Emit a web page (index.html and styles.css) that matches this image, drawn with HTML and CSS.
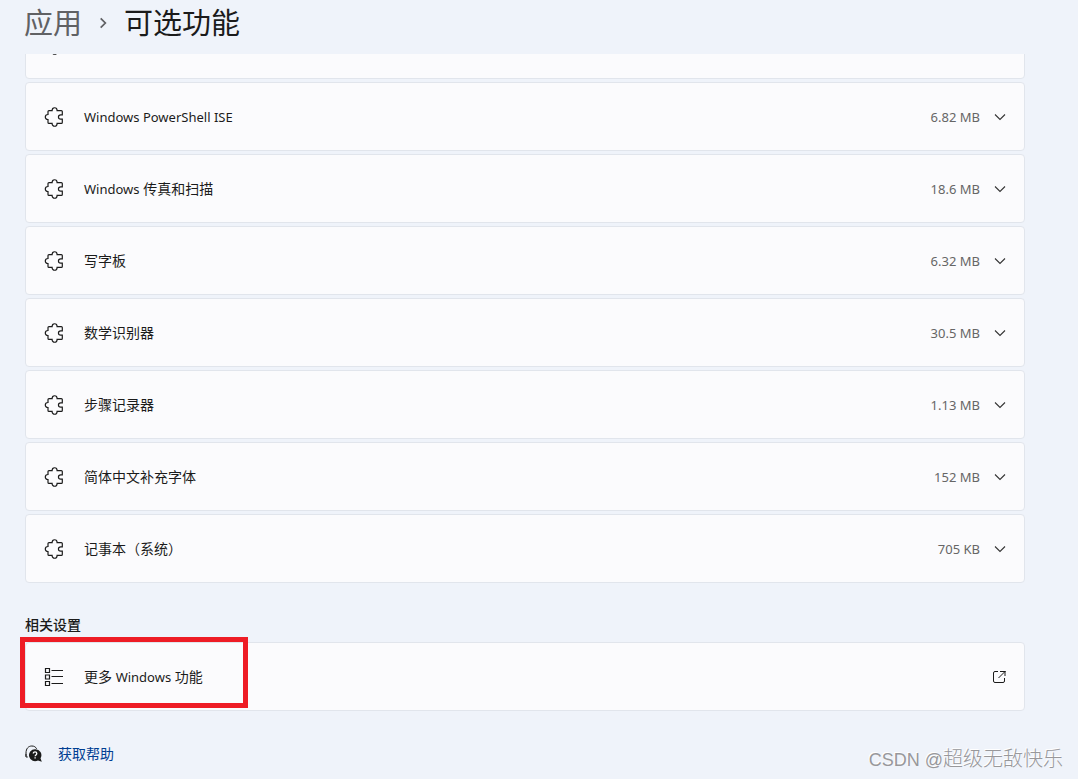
FILE: index.html
```
<!DOCTYPE html>
<html lang="zh-CN">
<head>
    <meta charset="UTF-8">
    <meta name="viewport" content="width=device-width, initial-scale=1.0">
    <title>可选功能</title>
    <link rel="stylesheet" href="styles.css">
</head>
<body>
    <svg class="sprite" aria-hidden="true">
        <symbol id="puzzle" viewBox="0 0 20 20">
            <path d="M5 3.600h3.100c0-3.800 5-3.800 5 0h4.200a1 1 0 0 1 1 1v3.200h-1.600c-3 0-3 4.400 0 4.400h1.600v3.200a1 1 0 0 1-1 1h-4.200c0 3.800-5 3.800-5 0H5a1 1 0 0 1-1-1v-2.900c-3.600 0-3.600-5 0-5V4.600a1 1 0 0 1 1-1z"/>
        </symbol>
        <symbol id="chevron" viewBox="0 0 12 12">
            <path d="M1 3.500l5 5 5-5"/>
        </symbol>
    </svg>

    <nav class="titulo">
        <a href="#" class="padre">应用</a>
        <svg class="separador" viewBox="0 0 12 12"><path d="M4 2l4 4-4 4"/></svg>
        <h1>可选功能</h1>
    </nav>

    <main class="contenido">
        <div class="lista">
            <button class="fila" aria-label="功能">
                <svg class="icono"><use href="#puzzle"/></svg>
                <span class="nombre"></span>
            </button>
            <button class="fila">
                <svg class="icono"><use href="#puzzle"/></svg>
                <span class="nombre"><span class="latin">Windows PowerShell ISE</span></span>
                <span class="peso">6.82 MB</span>
                <svg class="flecha"><use href="#chevron"/></svg>
            </button>
            <button class="fila">
                <svg class="icono"><use href="#puzzle"/></svg>
                <span class="nombre"><span class="latin">Windows</span> 传真和扫描</span>
                <span class="peso">18.6 MB</span>
                <svg class="flecha"><use href="#chevron"/></svg>
            </button>
            <button class="fila">
                <svg class="icono"><use href="#puzzle"/></svg>
                <span class="nombre">写字板</span>
                <span class="peso">6.32 MB</span>
                <svg class="flecha"><use href="#chevron"/></svg>
            </button>
            <button class="fila">
                <svg class="icono"><use href="#puzzle"/></svg>
                <span class="nombre">数学识别器</span>
                <span class="peso">30.5 MB</span>
                <svg class="flecha"><use href="#chevron"/></svg>
            </button>
            <button class="fila">
                <svg class="icono"><use href="#puzzle"/></svg>
                <span class="nombre">步骤记录器</span>
                <span class="peso">1.13 MB</span>
                <svg class="flecha"><use href="#chevron"/></svg>
            </button>
            <button class="fila">
                <svg class="icono"><use href="#puzzle"/></svg>
                <span class="nombre">简体中文补充字体</span>
                <span class="peso">152 MB</span>
                <svg class="flecha"><use href="#chevron"/></svg>
            </button>
            <button class="fila">
                <svg class="icono"><use href="#puzzle"/></svg>
                <span class="nombre">记事本（系统）</span>
                <span class="peso">705 KB</span>
                <svg class="flecha"><use href="#chevron"/></svg>
            </button>
        </div>

        <h2>相关设置</h2>
        <div class="relacionado">
            <button class="fila">
                <svg class="icono" viewBox="0 0 20 20">
                    <path d="M1.500 1.500h4v4h-4zM1.500 8h4v4h-4zM1.500 14.500h4v4h-4zM7.500 3.500H19M7.500 9.500H19M7.500 16.500H19"/>
                </svg>
                <span class="nombre">更多 <span class="latin">Windows</span> 功能</span>
                <svg class="externo" viewBox="0 0 14 14">
                    <path d="M6 1.500H3A1.500 1.500 0 0 0 1.500 3v8A1.500 1.500 0 0 0 3 12.500h8a1.500 1.500 0 0 0 1.500-1.500V8M8 1.500h5.500M13 1v5M13 1.500L6.500 8"/>
                </svg>
            </button>
            <div class="resaltado"></div>
        </div>

        <a href="#" class="ayuda">
            <svg viewBox="0 0 18 18">
                <path class="auricular" d="M1 11.500V8C1 3.500 3.500 1 6.800 1c2.300 0 4 1 4.800 2.800M1 9v3h1.800"/>
                <path class="globo" d="M10 4.200a6 6 0 1 0 3 11.200l3.800 1.300-1.300-3.400A6 6 0 0 0 10 4.200z"/>
                <path class="pregunta" d="M8.300 8.600c0-2.200 3.500-2.200 3.500 0 0 1.300-1.700 1.300-1.700 2.600M10.100 12.300v1.300"/>
            </svg>
            <span>获取帮助</span>
        </a>
    </main>

    <div class="marca"><span class="csdn">CSDN @</span>超级无敌快乐</div>
</body>
</html>
```
FILE: styles.css
```
*{
    box-sizing: border-box;
}

body{
    position: relative;
    min-height: 100vh;
    margin: 0;
    background-color: #eff3fa;
    color: #1b1b1b;
    font-family: "Noto Sans", "Noto Sans CJK SC", sans-serif;
    font-size: 14px;
    line-height: 20px;
}

svg{
    flex: none;
    fill: none;
    stroke: #1b1b1b;
}

.sprite{
    display: none;
}

.titulo{
    display: flex;
    align-items: center;
    height: 54px;
    padding: 0 24px 8px;
    font-size: 29px;
    line-height: 40px;
}

.titulo h1{
    margin: 0;
    font-size: 29px;
    font-weight: 400;
}

.padre{
    color: #606164;
    text-decoration: none;
}

.separador{
    width: 14px;
    height: 14px;
    margin: 0 14px;
    stroke: #606164;
    stroke-width: 1.5;
}

.contenido{
    overflow: hidden;
    padding: 0 53px 0 25px;
}

/* la lista aparece desplazada bajo el titulo */
.lista{
    display: flex;
    flex-direction: column;
    gap: 3px;
    margin-top: -44px;
}

.fila{
    display: flex;
    align-items: center;
    width: 100%;
    height: 69px;
    padding: 0 18px;
    border: 1px solid #e1e5ec;
    border-radius: 4px;
    background-color: #fbfbfd;
    color: #1b1b1b;
    font: inherit;
    text-align: left;
}

.icono{
    width: 20px;
    height: 20px;
    margin-right: 20px;
    stroke-width: 1.2;
}

.nombre{
    flex: 1;
}

.latin{
    font-size: 13px;
}

.peso{
    color: #666;
    font-size: 13px;
}

.flecha{
    width: 12px;
    height: 12px;
    margin-left: 14px;
    stroke: #333;
    stroke-width: 1.1;
}

.externo{
    width: 14px;
    height: 14px;
}

h2{
    margin: 32px 0 7px;
    font-size: 14px;
    font-weight: 500;
    line-height: 20px;
}

.relacionado{
    position: relative;
}

.resaltado{
    position: absolute;
    top: -5px;
    left: -5px;
    width: 228px;
    height: 71px;
    border: 5px solid #ee1c25;
    pointer-events: none;
}

.ayuda{
    display: inline-flex;
    align-items: center;
    gap: 15px;
    margin: 33px 0 15px;
    color: #003e92;
    text-decoration: none;
}

.ayuda svg{
    width: 18px;
    height: 18px;
}

.globo{
    fill: #1b1b1b;
    stroke: none;
}

.pregunta{
    stroke: #fff;
    stroke-width: 1.3;
}

.marca{
    position: absolute;
    right: 15px;
    bottom: 4px;
    color: #98989b;
    font-family: "Liberation Sans", "Noto Sans CJK SC", sans-serif;
    font-size: 20px;
    font-weight: 300;
    line-height: 30px;
    text-shadow: -1px -1px 0 #fff;
}

.csdn{
    font-size: 18px;
}
```
